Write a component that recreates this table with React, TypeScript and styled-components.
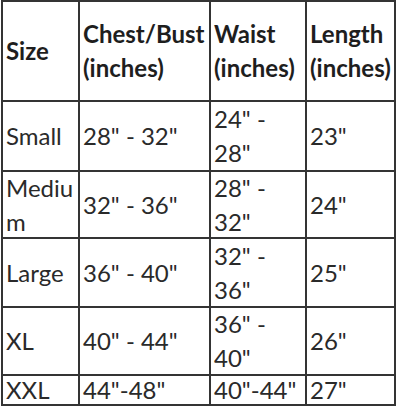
import React from "react";
import styled, { createGlobalStyle } from "styled-components";

const Global = createGlobalStyle`
  html, body { margin: 0; padding: 0; background: #ffffff; }
  body { font-family: Lato, "Noto Sans", sans-serif; }
`;

const Table = styled.div`
  display: grid;
  grid-template-columns: 75px 129px 94px 87px;
  grid-template-rows: 98px 68px 65px 67px 66px 28px;
  gap: 2px;
  padding: 2px;
  margin-left: 1px;
  width: max-content;
  background: #343434;
`;

const Cell = styled.div<{ $head?: boolean }>`
  background: #ffffff;
  display: flex;
  align-items: center;
  padding: 0 2px 0 3px;
  font-size: 24px;
  line-height: 34px;
  font-weight: ${(p) => (p.$head ? 700 : 400)};
  color: ${(p) => (p.$head ? "#1e1e1e" : "#2a2a2a")};
  overflow-wrap: anywhere;
  white-space: normal;
  min-width: 0;
`;

const CellText = styled.span`
  min-width: 0;
  overflow-wrap: anywhere;
`;

const rows: string[][] = [
  ["Small", "28\" - 32\"", "24\" - 28\"", "23\""],
  ["Medium", "32\" - 36\"", "28\" - 32\"", "24\""],
  ["Large", "36\" - 40\"", "32\" - 36\"", "25\""],
  ["XL", "40\" - 44\"", "36\" - 40\"", "26\""],
  ["XXL", "44\"-48\"", "40\"-44\"", "27\""],
];

export default function App() {
  return (
    <>
      <Global />
      <Table>
        <Cell $head><CellText>Size</CellText></Cell>
        <Cell $head><CellText>Chest/Bust (inches)</CellText></Cell>
        <Cell $head><CellText>Waist (inches)</CellText></Cell>
        <Cell $head><CellText>Length (inches)</CellText></Cell>
        {rows.map((r) =>
          r.map((c, i) => (
            <Cell key={r[0] + i}>
              <CellText>{c}</CellText>
            </Cell>
          ))
        )}
      </Table>
    </>
  );
}
